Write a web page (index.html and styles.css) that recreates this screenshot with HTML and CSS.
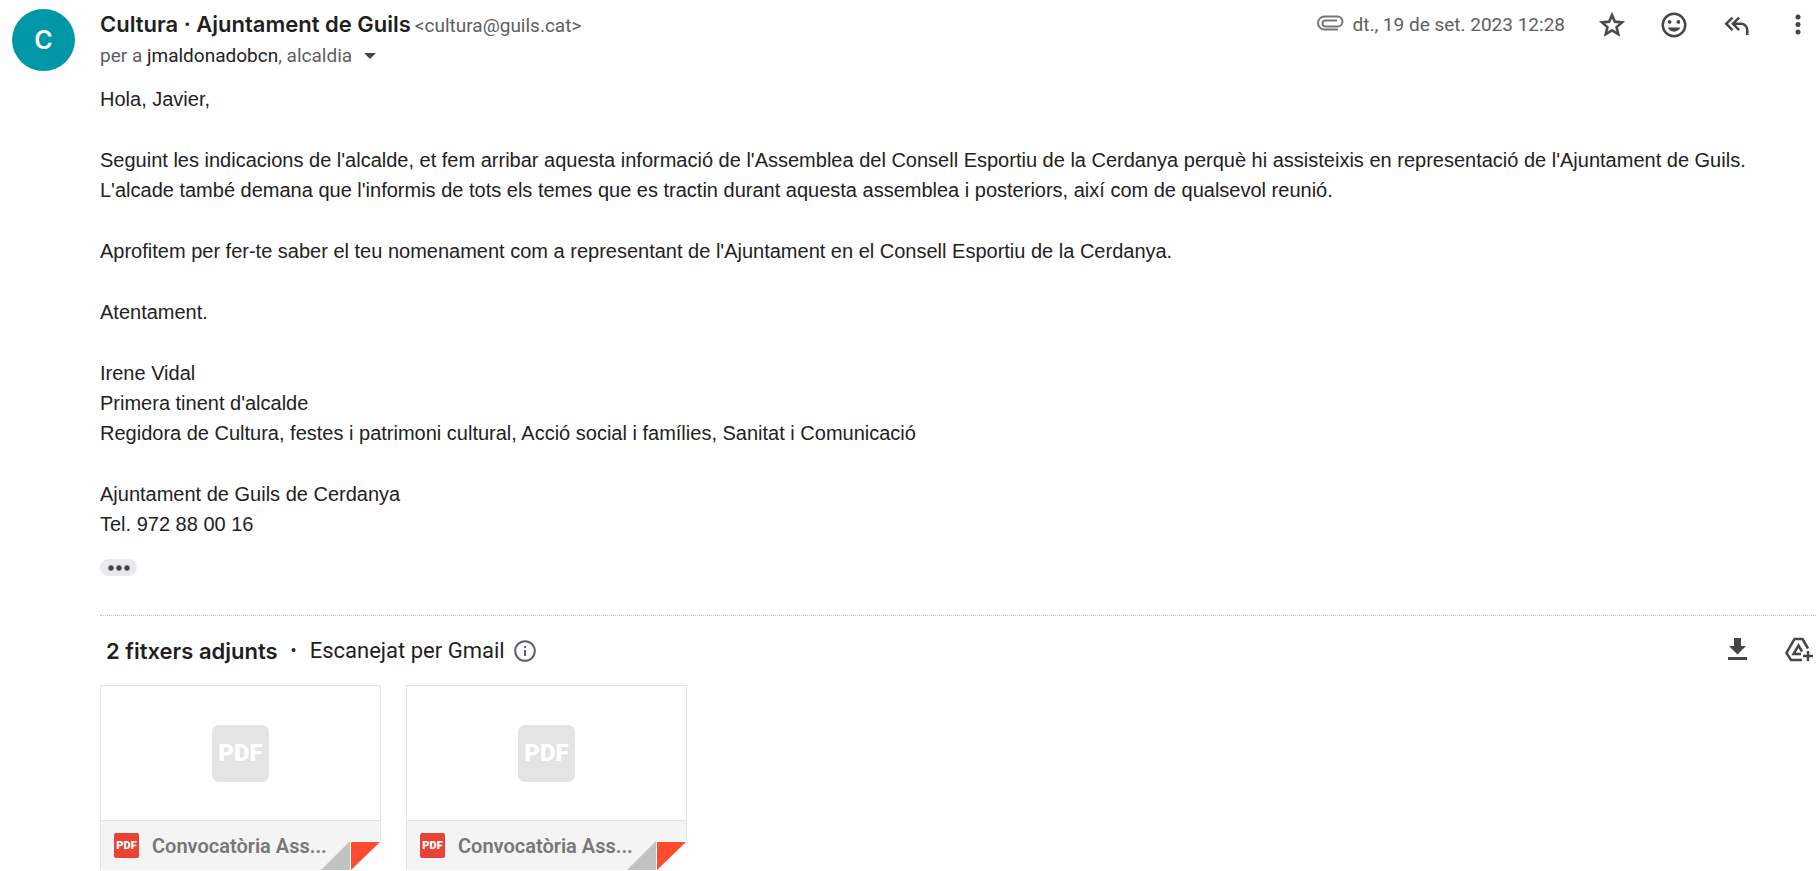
FILE: index.html
```html
<!DOCTYPE html>
<html lang="ca">

<head>
    <meta charset="utf-8">
    <title>Cultura · Ajuntament de Guils</title>
    <link rel="stylesheet" href="styles.css">
</head>

<body>
    <article class="message">
        <div class="avatar">C</div>
        <div class="content">
            <header class="header">
                <div class="sender">
                    <div class="from"><span class="name">Cultura · Ajuntament de Guils</span> <span class="email">&lt;cultura@guils.cat&gt;</span></div>
                    <div class="to">
                        <span>per a <span class="me">jmaldonadobcn</span>, alcaldia</span>
                        <button class="details" aria-label="Mostra els detalls">
                            <svg width="12" height="6" viewBox="0 0 12 6"><path d="M0 0h12L6 6z"/></svg>
                        </button>
                    </div>
                </div>
                <div class="meta">
                    <svg class="clip" width="28" height="19" viewBox="0 0 28 19"><path d="M22 14.500H8.500a6.500 6.500 0 0 1 0-13H21.500a5 5 0 0 1 0 10H9.500a3 3 0 0 1 0-6H21"/></svg>
                    <span class="date">dt., 19 de set. 2023 12:28</span>
                </div>
                <div class="actions">
                    <button aria-label="Destaca">
                        <svg class="star" width="30" height="30" viewBox="0 0 24 24"><path d="M22 9.240l-7.190-.62L12 2 9.190 8.630 2 9.240l5.460 4.730L5.820 21 12 17.270 18.180 21l-1.630-7.030L22 9.240zM12 15.400l-3.760 2.270 1-4.280-3.320-2.880 4.380-.38L12 6.100l1.710 4.040 4.380.38-3.320 2.880 1 4.280L12 15.400z"/></svg>
                    </button>
                    <button aria-label="Afegeix una reacció">
                        <svg width="30" height="30" viewBox="0 0 24 24"><path d="M12 2a10 10 0 1 0 0 20 10 10 0 0 0 0-20zm0 18a8 8 0 1 1 0-16 8 8 0 0 1 0 16z"/><circle cx="8.500" cy="9.500" r="1.500"/><circle cx="15.500" cy="9.500" r="1.500"/><path d="M7 14h10c-.8 2-2.700 3.300-5 3.300S7.800 16 7 14z"/></svg>
                    </button>
                    <button aria-label="Respon a tots">
                        <svg width="30" height="30" viewBox="0 0 24 24"><path d="M8.500 5.300L2.800 11l5.700 5.700 1.400-1.400L5.600 11l4.300-4.300z"/><path d="M13.800 5.300L8.100 11l5.700 5.700 1.400-1.400-3.300-3.300H16a4 4 0 0 1 4 4v4h2v-4a6 6 0 0 0-6-6h-4.100l3.300-3.300z"/></svg>
                    </button>
                    <button aria-label="Més">
                        <svg width="30" height="30" viewBox="0 0 24 24"><circle cx="12" cy="5.500" r="2"/><circle cx="12" cy="11.500" r="2"/><circle cx="12" cy="17.500" r="2"/></svg>
                    </button>
                </div>
            </header>

            <div class="body">
                <p>Hola, Javier,</p>
                <p>Seguint les indicacions de l'alcalde, et fem arribar aquesta informació de l'Assemblea del Consell Esportiu de la Cerdanya perquè hi assisteixis en representació de l'Ajuntament de Guils.<br>
                L'alcade també demana que l'informis de tots els temes que es tractin durant aquesta assemblea i posteriors, així com de qualsevol reunió.</p>
                <p>Aprofitem per fer-te saber el teu nomenament com a representant de l'Ajuntament en el Consell Esportiu de la Cerdanya.</p>
                <p>Atentament.</p>
                <p>Irene Vidal<br>
                Primera tinent d'alcalde<br>
                Regidora de Cultura, festes i patrimoni cultural, Acció social i famílies, Sanitat i Comunicació</p>
                <p>Ajuntament de Guils de Cerdanya<br>
                Tel. 972 88 00 16</p>
            </div>
            <button class="trimmed" aria-label="Mostra el contingut retallat">
                <svg width="22" height="6" viewBox="0 0 22 6"><circle cx="3" cy="3" r="2.700"/><circle cx="11" cy="3" r="2.700"/><circle cx="19" cy="3" r="2.700"/></svg>
            </button>

            <section class="attachments">
                <div class="attachments-header">
                    <h2>2 fitxers adjunts</h2>
                    <span class="bullet">•</span>
                    <span class="scanned">Escanejat per Gmail</span>
                    <button class="info" aria-label="Informació">
                        <svg width="22" height="22" viewBox="0 0 22 22"><circle cx="11" cy="11" r="9.800"/><path d="M11 10v6M11 6v2"/></svg>
                    </button>
                    <div class="actions">
                        <button aria-label="Baixa-ho tot">
                            <svg width="30" height="30" viewBox="0 0 30 30"><path d="M13 2h7v8h5l-8.500 8.500L8 10h5zM7 21h19v3H7z"/></svg>
                        </button>
                        <button aria-label="Afegeix-ho tot a Drive">
                            <svg class="drive" width="30" height="30" viewBox="0 0 30 30"><path d="M19 24H8L3.500 17 11.500 3h8l5.500 9.500"/><path d="M18 18H10.500l5-8.500 3.500 6"/><path d="M25 15v10M20 20h10"/></svg>
                        </button>
                    </div>
                </div>
                <div class="cards">
                    <a class="card" href="#">
                        <div class="preview"><span class="pdf-large">PDF</span></div>
                        <div class="file"><span class="pdf-small">PDF</span><span class="filename">Convocatòria Ass...</span></div>
                        <svg class="fold" width="60" height="29" viewBox="0 0 60 29"><path fill="#fff" d="M29 0h31v29H29z"/><path fill="#c2c2c2" d="M0 29L29 0v29z"/><path fill="#ff4b2e" d="M30 1h29L30 29z"/></svg>
                    </a>
                    <a class="card" href="#">
                        <div class="preview"><span class="pdf-large">PDF</span></div>
                        <div class="file"><span class="pdf-small">PDF</span><span class="filename">Convocatòria Ass...</span></div>
                        <svg class="fold" width="60" height="29" viewBox="0 0 60 29"><path fill="#fff" d="M29 0h31v29H29z"/><path fill="#c2c2c2" d="M0 29L29 0v29z"/><path fill="#ff4b2e" d="M30 1h29L30 29z"/></svg>
                    </a>
                </div>
            </section>
        </div>
    </article>
</body>

</html>
```
FILE: styles.css
```css
        body {
            margin: 0;
            background: white;
            color: #222;
            font-family: Roboto, "Liberation Sans", sans-serif;
        }

        button {
            padding: 0;
            border: 0;
            background: none;
            color: inherit;
            cursor: pointer;
        }

        svg {
            display: block;
            fill: currentColor;
        }

        .message {
            display: flex;
            gap: 25px;
            padding: 9px 2px 0 12px;
        }

        .avatar {
            display: flex;
            flex: none;
            align-items: center;
            justify-content: center;
            width: 63px;
            height: 62px;
            border-radius: 50%;
            background: #0097a7;
            color: white;
            font-family: Inter, sans-serif;
            font-size: 25px;
            font-weight: 600;
        }

        .content {
            flex: 1;
            min-width: 0;
        }

        .header {
            display: flex;
            align-items: flex-start;
        }

        .sender {
            flex: 1;
        }

        .from {
            height: 31px;
            line-height: 31px;
        }

        .name {
            color: #1f1f1f;
            font-family: Inter, sans-serif;
            font-size: 22px;
            font-weight: 600;
        }

        .email,
        .to,
        .date {
            color: #5e5e5e;
            font-size: 19px;
        }

        .to {
            display: flex;
            align-items: center;
            gap: 12px;
            height: 31px;
            line-height: 31px;
        }

        .me {
            color: #222;
        }

        .details {
            color: #444746;
        }

        .meta {
            display: flex;
            align-items: center;
            gap: 8px;
            margin-right: 29px;
            line-height: 31px;
        }

        .clip {
            fill: none;
            stroke: #777;
            stroke-width: 2;
        }

        .actions {
            display: flex;
            gap: 26px;
            color: #444746;
        }

        .actions button {
            display: flex;
            align-items: center;
            justify-content: center;
            width: 36px;
            height: 32px;
        }

        .star {
            stroke: currentColor;
            stroke-width: 0.5;
        }

        .body {
            margin-top: 13px;
            font-family: "Liberation Sans", Arial, sans-serif;
            font-size: 20px;
            line-height: 30px;
        }

        .body p {
            margin: 0 0 31px;
        }

        .trimmed {
            display: flex;
            align-items: center;
            justify-content: center;
            width: 37px;
            height: 17px;
            margin-top: -11px;
            border-radius: 9px;
            background: #e8eaed;
            color: #444746;
        }

        .attachments {
            margin-top: 39px;
            border-top: 1px dotted #c4c4c4;
        }

        .attachments-header {
            display: flex;
            align-items: center;
            height: 69px;
            padding-left: 6px;
            color: #1f1f1f;
            font-size: 22px;
        }

        .attachments-header h2 {
            margin: 0;
            font-family: Inter, sans-serif;
            font-size: 22px;
            font-weight: 600;
        }

        .bullet {
            margin: 0 13px;
            font-size: 18px;
        }

        .info {
            margin-left: 9px;
        }

        .info svg {
            fill: none;
            stroke: #5f6368;
            stroke-width: 2;
        }

        .attachments-header .actions {
            margin-left: auto;
        }

        .drive {
            fill: none;
            stroke: currentColor;
            stroke-width: 2.5;
        }

        .cards {
            display: flex;
            gap: 25px;
        }

        .card {
            position: relative;
            width: 279px;
            border: 1px solid #e3e3e3;
            border-bottom: 0;
            color: #777;
            text-decoration: none;
        }

        .preview {
            display: flex;
            align-items: center;
            justify-content: center;
            height: 134px;
        }

        .pdf-large,
        .pdf-small {
            display: flex;
            align-items: center;
            justify-content: center;
            color: white;
            font-weight: 900;
        }

        .pdf-large {
            width: 57px;
            height: 57px;
            border-radius: 7px;
            background: #e4e4e4;
            font-size: 24px;
        }

        .pdf-small {
            width: 25px;
            height: 25px;
            border-radius: 2px;
            background: #ea4335;
            font-size: 11px;
        }

        .file {
            display: flex;
            align-items: center;
            gap: 13px;
            height: 49px;
            padding-left: 13px;
            border-top: 1px solid #e3e3e3;
            background: #f4f4f4;
        }

        .filename {
            font-size: 20px;
            font-weight: 600;
        }

        .fold {
            position: absolute;
            right: -1px;
            bottom: 0;
        }
```
